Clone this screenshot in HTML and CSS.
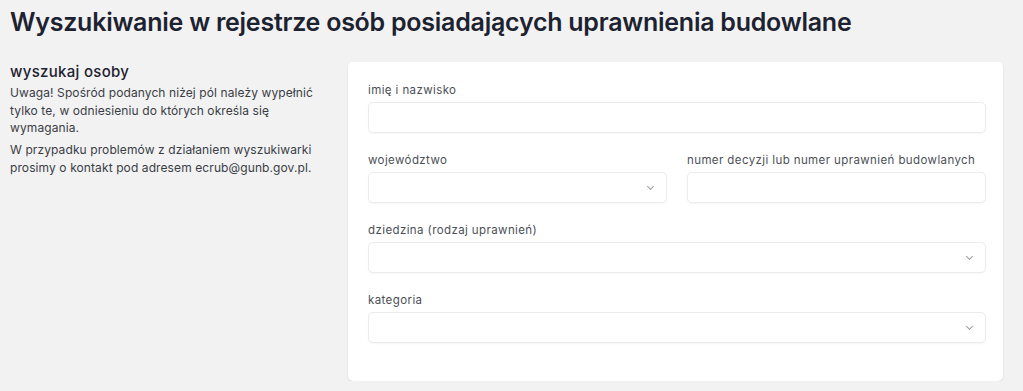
FILE: index.html
```html
<!DOCTYPE html>
<html>
  <head>
    <title>Wyszukiwanie w rejestrze</title>
    <link rel="stylesheet" href="styles.css">
  </head>
  <body>
    <h1 class="title">Wyszukiwanie w rejestrze osób posiadających uprawnienia budowlane</h1>

    <div class="layout">
      <div class="intro">
        <h2>wyszukaj osoby</h2>
        <p>Uwaga! Spośród podanych niżej pól należy wypełnić tylko te, w odniesieniu do których określa się wymagania.</p>
        <p>W przypadku problemów z działaniem wyszukiwarki prosimy o kontakt pod adresem ecrub@gunb.gov.pl.</p>
      </div>

      <form class="card">
        <div class="field">
          <label>imię i nazwisko</label>
          <input type="text" class="control">
        </div>
        <div class="row">
          <div class="field">
            <label>województwo</label>
            <div class="control select"><span class="chev"></span></div>
          </div>
          <div class="field">
            <label>numer decyzji lub numer uprawnień budowlanych</label>
            <input type="text" class="control">
          </div>
        </div>
        <div class="field">
          <label>dziedzina (rodzaj uprawnień)</label>
          <div class="control select"><span class="chev"></span></div>
        </div>
        <div class="field">
          <label>kategoria</label>
          <div class="control select"><span class="chev"></span></div>
        </div>
      </form>
    </div>
  </body>
</html>
```

FILE: styles.css
```css
body {
  margin: 0;
  padding: 0 20px 0 10px;
  background: #f2f2f2;
  font-family: "Inter", "Open Sans", sans-serif;
  color: #333;
}

.title {
  margin: 0;
  padding: 7px 0 0;
  height: 41px;
  font-size: 25px;
  font-weight: 600;
  color: #1d2230;
  letter-spacing: -0.25px;
}

.layout {
  display: flex;
  gap: 18px;
  margin-top: 14px;
}

.intro {
  width: 320px;
  flex-shrink: 0;
}

.intro h2 {
  margin: 0 0 3px;
  font-size: 15px;
  font-weight: 500;
  color: #1d2230;
  letter-spacing: 0.3px;
}

.intro p {
  margin: 0 0 4.5px;
  font-size: 12px;
  line-height: 17.5px;
  letter-spacing: 0.1px;
  color: #3a3d45;
}

.card {
  flex: 1;
  background: #fff;
  border-radius: 5px;
  box-shadow: 0 1px 2px rgba(0, 0, 0, 0.12);
  padding: 21px 17px 38px 20px;
  display: flex;
  flex-direction: column;
  gap: 20px;
}

.row {
  display: flex;
  gap: 20px;
}

.row .field {
  flex: 1;
}

.field label {
  display: block;
  font-size: 11.5px;
  line-height: 14px;
  letter-spacing: 0.4px;
  color: #4c4f57;
  margin-bottom: 5px;
  white-space: nowrap;
}

.control {
  box-sizing: border-box;
  display: block;
  width: 100%;
  height: 31px;
  border: 1px solid #ececec;
  border-radius: 5px;
  background: #fff;
  box-shadow: 0 1px 2px rgba(0, 0, 0, 0.04);
  outline: none;
  font: inherit;
}

.select {
  position: relative;
}

.chev {
  position: absolute;
  right: 13px;
  top: 11px;
  width: 4px;
  height: 4px;
  border-right: 1px solid #9a9ca3;
  border-bottom: 1px solid #9a9ca3;
  transform: rotate(45deg);
}
```
